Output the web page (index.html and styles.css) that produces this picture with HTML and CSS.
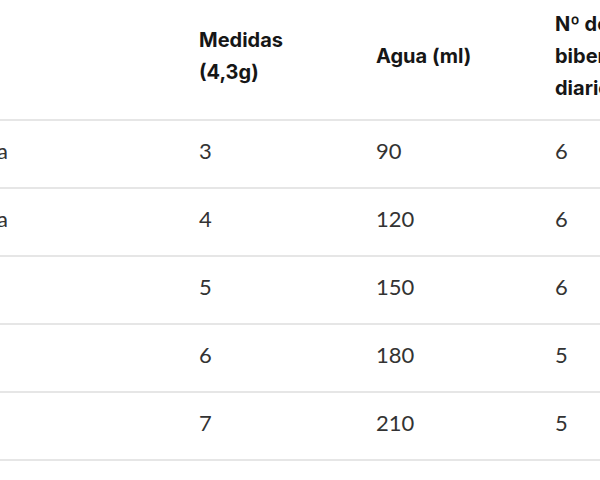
FILE: index.html
```html
<!DOCTYPE html>
<html lang="es">
<head>
<meta charset="utf-8">
<link rel="stylesheet" href="styles.css">
</head>
<body>
<div class="viewport">
  <table class="dosis">
    <colgroup>
      <col class="c-edad">
      <col class="c-med">
      <col class="c-agua">
      <col class="c-bib">
    </colgroup>
    <thead>
      <tr>
        <th>Edad</th>
        <th>Medidas (4,3g)</th>
        <th>Agua (ml)</th>
        <th>Nº de biberones diarios</th>
      </tr>
    </thead>
    <tbody>
      <tr><td>1ª semana</td><td>3</td><td>90</td><td>6</td></tr>
      <tr><td>2ª semana</td><td>4</td><td>120</td><td>6</td></tr>
      <tr><td>1 mes</td><td>5</td><td>150</td><td>6</td></tr>
      <tr><td>2 meses</td><td>6</td><td>180</td><td>5</td></tr>
      <tr><td>3 meses</td><td>7</td><td>210</td><td>5</td></tr>
    </tbody>
  </table>
</div>
</body>
</html>
```
FILE: styles.css
```css
html, body {
  margin: 0;
  padding: 0;
  background: #ffffff;
}

.viewport {
  width: 600px;
  height: 480px;
  overflow: hidden;
}

.dosis {
  margin-left: -112px;
  border-collapse: collapse;
  table-layout: fixed;
  width: 787px;
  font-family: Lato, "Noto Sans", sans-serif;
}

.c-edad { width: 291px; }
.c-med { width: 177px; }
.c-agua { width: 179px; }
.c-bib { width: 140px; }

.dosis th {
  height: 120px;
  padding: 0 20px 8px;
  text-align: left;
  vertical-align: middle;
  font-family: Inter, "Noto Sans", sans-serif;
  font-size: 20px;
  line-height: 32px;
  font-weight: 700;
  color: #161616;
  border-bottom: 2px solid #e6e6e6;
  box-sizing: border-box;
}

.dosis td {
  height: 60px;
  padding: 0 20px 6px;
  text-align: left;
  vertical-align: middle;
  font-size: 22px;
  line-height: 28px;
  font-weight: 400;
  color: #333333;
  border-bottom: 2px solid #e6e6e6;
}
```
